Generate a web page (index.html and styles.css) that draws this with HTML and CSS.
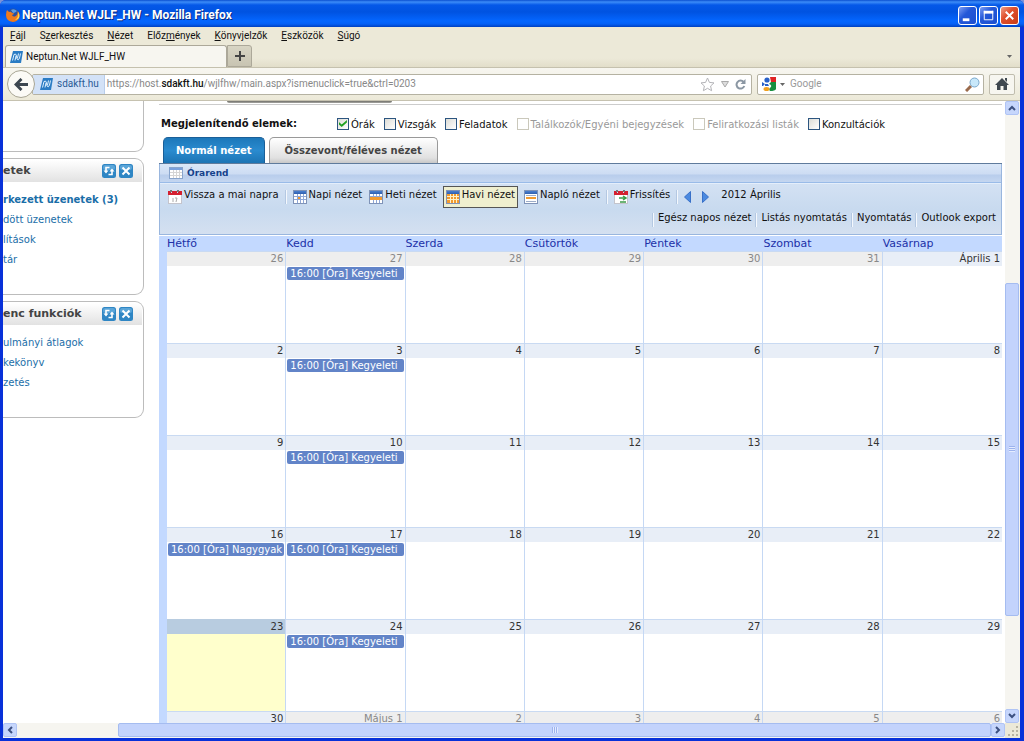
FILE: index.html
```html
<!DOCTYPE html>
<html lang="hu">
<head>
<meta charset="utf-8">
<title>Neptun.Net WJLF_HW</title>
<link rel="stylesheet" href="styles.css">
</head>
<body>
<svg class="defs" aria-hidden="true">
  <defs>
    <linearGradient id="g-blue" x1="0" y1="0" x2="0" y2="1"><stop offset="0" stop-color="#4a7fd0"/><stop offset="1" stop-color="#2f5fae"/></linearGradient>
    <symbol id="neptun" viewBox="0 0 13 12"><path d="M3 0H13L11 12H0Z" fill="#2a7cc4"/><path d="M2.500 9.500L4 3.500Q6 2 6.500 5L7 8Q8.500 10 9.500 7L10.500 2.500M5 9.500L6 5M7.500 7L8.500 2.500" fill="none" stroke="#dff1ff" stroke-width="1"/></symbol>
    <symbol id="cal" viewBox="0 0 14 14"><rect x=".5" y=".5" width="13" height="13" fill="#fff" stroke="#7f93b8"/><rect x="1" y="1" width="12" height="3" fill="url(#g-blue)"/></symbol>
    <symbol id="grid" viewBox="0 0 14 14"><path d="M1 6.500H13M1 9.500H13M4.500 4V13M7.500 4V13M10.500 4V13" stroke="#8ea6d6" fill="none"/></symbol>
    <symbol id="today" viewBox="0 0 14 14"><rect x=".5" y="4.500" width="13" height="9" fill="#fff" stroke="#c4c4cc"/><path d="M0 1H3V3H4V1H9V3H10V1H14V5H0Z" fill="#d42030"/><path d="M3 0V2M10 0V2" stroke="#777" stroke-width="2"/></symbol>
    <symbol id="sync" viewBox="0 0 14 14"><rect width="14" height="14" rx="2.500" fill="#2f86c4"/><rect x="1" y="1" width="12" height="5" rx="2" fill="#5aa5d8"/><path d="M7.500 3.500H4V7M6.500 10.500H10V7" fill="none" stroke="#fff" stroke-width="1.600"/><path d="M1.500 6.500H6.500L4 9.500ZM7.500 7.500H12.500L10 4.500Z" fill="#fff"/></symbol>
    <symbol id="close" viewBox="0 0 14 14"><rect width="14" height="14" rx="2.500" fill="#2f86c4"/><rect x="1" y="1" width="12" height="5" rx="2" fill="#5aa5d8"/><path d="M3.500 3.500L10.500 10.500M10.500 3.500L3.500 10.500" stroke="#fff" stroke-width="2"/></symbol>
  </defs>
</svg>
<div class="window">
  <header class="titlebar">
    <svg class="ic14" viewBox="0 0 14 14"><circle cx="7" cy="7" r="6.500" fill="#2850a0"/><path d="M5 2Q8 0 11 3Q9 5 7 5Z" fill="#5c9ce0"/><path d="M1 2L3 4Q5 3 6 5Q8 5 8 6L6 7Q7 9 9 8.500Q12 7 11.500 3Q14 5 13.500 9Q12 13.500 7 14Q0 13 0 7Q0 4 1 2Z" fill="#ee7a1c"/><path d="M12 4Q14 6 13 10Q11 12 9 12Q13 9 12 4Z" fill="#ffd34a"/></svg>
    <h1>Neptun.Net WJLF_HW - Mozilla Firefox</h1>
    <button class="winbtn" aria-label="Kis méret"><svg viewBox="0 0 18 18"><rect x="4" y="12" width="7" height="3" fill="#fff"/></svg></button>
    <button class="winbtn" aria-label="Teljes méret"><svg viewBox="0 0 18 18"><path d="M4.500 4V13.500H13.500V4" fill="none" stroke="#fff"/><rect x="4" y="4" width="10" height="3" fill="#fff"/></svg></button>
    <button class="winbtn winbtn-close" aria-label="Bezárás"><svg viewBox="0 0 18 18"><path d="M5 5L13 13M13 5L5 13" stroke="#fff" stroke-width="2"/></svg></button>
  </header>
  <div class="frame">
    <nav class="menubar">
      <button><u>F</u>ájl</button><button>S<u>z</u>erkesztés</button><button><u>N</u>ézet</button><button>Előz<u>m</u>ények</button><button><u>K</u>önyvjelzők</button><button><u>E</u>szközök</button><button><u>S</u>úgó</button>
    </nav>
    <div class="tabbar">
      <button class="btab"><svg class="favicon"><use href="#neptun"/></svg>Neptun.Net WJLF_HW</button>
      <button class="newtab" aria-label="Új lap"><svg viewBox="0 0 10 10"><path d="M5 0V10M0 5H10" stroke="#444" stroke-width="2"/></svg></button>
      <button class="alltabs" aria-label="Lapok listája"><svg viewBox="0 0 5 3"><path d="M0 0H5L2.500 3Z" fill="#666"/></svg></button>
    </div>
    <div class="navbar">
      <button class="back" aria-label="Vissza"><svg viewBox="0 0 16 14"><path d="M8 1L2 7L8 13M2 7H15" fill="none" stroke="#3c4650" stroke-width="3"/></svg></button>
      <div class="urlbar">
        <span class="site"><svg class="favicon"><use href="#neptun"/></svg>sdakft.hu</span>
        <div class="url" role="textbox" aria-label="Cím">https://host.<b>sdakft.hu</b>/wjlfhw/main.aspx?ismenuclick=true&amp;ctrl=0203</div>
        <svg class="ic15" viewBox="0 0 15 15"><path d="M7.500 1L9.400 5.400L14 5.900L10.600 9L11.600 13.700L7.500 11.300L3.400 13.700L4.400 9L1 5.900L5.600 5.400Z" fill="#fff" stroke="#b4b4b8"/></svg>
        <svg class="ic8" viewBox="0 0 8 7"><path d="M.5.500H7.500L4 6Z" fill="#ddd" stroke="#aaa"/></svg>
        <svg class="ic11" viewBox="0 0 11 11"><path d="M8.600 3A4 4 0 1 0 9.300 7" fill="none" stroke="#8b97a3" stroke-width="2"/><path d="M10.500 0V5H5.500Z" fill="#8b97a3"/></svg>
      </div>
      <form class="search">
        <svg class="ic14" viewBox="0 0 14 14"><rect width="14" height="14" fill="#fff"/><path d="M8 0H14V5H9Z" fill="#e02424"/><path d="M9 5H14V12Q13 14 8 14Q6 12 9 10Q10 8 7 7Z" fill="#189040"/><circle cx="5" cy="3" r="2.600" fill="#2860c8"/><path d="M0 5L3 7L1 9H0Z" fill="#2860c8"/><path d="M3 7L6 7L7 9H3Z" fill="#2860c8"/><ellipse cx="4.500" cy="12" rx="3" ry="2" fill="#f0a020"/></svg>
        <svg class="ic5" viewBox="0 0 5 3"><path d="M0 0H5L2.500 3Z" fill="#666"/></svg>
        <input type="text" placeholder="Google" aria-label="Google">
        <svg class="ic15" viewBox="0 0 15 15"><path d="M1 14L6 9" stroke="#9a6a4c" stroke-width="3"/><circle cx="9.500" cy="5.500" r="4.500" fill="#c8e8fa" stroke="#7aa8cc"/></svg>
      </form>
      <button class="home" aria-label="Kezdőlap"><svg viewBox="0 0 14 12"><path d="M7 0L14 7H12V12H8.500V8H5.500V12H2V7H0Z" fill="#40484f"/><path d="M10 0H12V4L10 2Z" fill="#40484f"/></svg></button>
    </div>
    <div class="viewport">
      <div class="page">
        <aside class="side">
          <section class="card card-top"></section>
          <section class="card card-messages">
            <header><h2>etek</h2><button aria-label="Frissítés"><svg><use href="#sync"/></svg></button><button aria-label="Bezárás"><svg><use href="#close"/></svg></button></header>
            <ul><li><a class="strong" href="#">rkezett üzenetek (3)</a></li><li><a href="#">dött üzenetek</a></li><li><a href="#">lítások</a></li><li><a href="#">tár</a></li></ul>
          </section>
          <section class="card card-fav">
            <header><h2>enc funkciók</h2><button aria-label="Frissítés"><svg><use href="#sync"/></svg></button><button aria-label="Bezárás"><svg><use href="#close"/></svg></button></header>
            <ul><li><a href="#">ulmányi átlagok</a></li><li><a href="#">kekönyv</a></li><li><a href="#">zetés</a></li></ul>
          </section>
        </aside>
        <main>
          <div class="topline"><span class="shade"></span></div>
          <div class="filters">
            <strong>Megjelenítendő elemek:</strong>
            <label><input type="checkbox" checked>Órák</label>
            <label><input type="checkbox">Vizsgák</label>
            <label><input type="checkbox">Feladatok</label>
            <label class="off"><input type="checkbox" disabled>Találkozók/Egyéni bejegyzések</label>
            <label class="off"><input type="checkbox" disabled>Feliratkozási listák</label>
            <label><input type="checkbox">Konzultációk</label>
          </div>
          <div class="tabs"><button class="tab active">Normál nézet</button><button class="tab tab-wide">Összevont/féléves nézet</button></div>
          <section class="panel">
            <h2 class="panel-title"><svg viewBox="0 0 14 14"><rect x=".5" y="1.500" width="13" height="11" fill="#fff" stroke="#88a4cc"/><path d="M1 3H13" stroke="#7aa0dc" stroke-width="2"/><path d="M1 6.500H13M1 9.500H13M4.500 4V12M7.500 4V12M10.500 4V12" stroke="#d5d5d5"/></svg>Órarend</h2>
            <div class="toolbar">
              <div class="tools">
                <button><svg viewBox="0 0 14 14"><use href="#today"/><path d="M5 8V12M7 8H9L8 12" fill="none" stroke="#aaa"/></svg>Vissza a mai napra</button>
                <i class="sep"></i>
                <button><svg viewBox="0 0 14 14"><use href="#cal"/><use href="#grid"/><rect x="5" y="7" width="2" height="2" fill="#f29a2e"/></svg>Napi nézet</button>
                <button><svg viewBox="0 0 14 14"><use href="#cal"/><use href="#grid"/><rect x="1" y="7" width="12" height="3" fill="#f29a2e"/></svg>Heti nézet</button>
                <button class="on"><svg viewBox="0 0 14 14"><use href="#cal"/><rect x="1" y="4" width="12" height="9" fill="#f29a2e"/><path d="M1 6.500H13M1 9.500H13M4.500 4V13M7.500 4V13M10.500 4V13" stroke="#fff2c8"/></svg>Havi nézet</button>
                <button><svg viewBox="0 0 14 14"><use href="#cal"/><path d="M2 8H12" stroke="#f29a2e" stroke-width="2"/><path d="M2 5.500H12M2 11.500H12" stroke="#9cacc8"/></svg>Napló nézet</button>
                <i class="sep"></i>
                <button><svg viewBox="0 0 14 14"><use href="#today"/><path d="M5 8H11M9 6L12 8L9 10M12 12H6" fill="none" stroke="#3c9c48" stroke-width="1.500"/></svg>Frissítés</button>
                <i class="sep"></i>
                <button class="arrow" aria-label="Előző"><svg viewBox="0 0 7 12"><path d="M6.500.500V11.500L.5 6Z" fill="#4b8ae0" stroke="#3870c8"/></svg></button>
                <button class="arrow" aria-label="Következő"><svg viewBox="0 0 7 12"><path d="M.5.500V11.500L6.500 6Z" fill="#4b8ae0" stroke="#3870c8"/></svg></button>
                <span class="month">2012 Április</span>
              </div>
              <div class="tools tools-end">
                <i class="sep"></i><button>Egész napos nézet</button><i class="sep"></i><button>Listás nyomtatás</button><i class="sep"></i><button>Nyomtatás</button><i class="sep"></i><button>Outlook export</button>
              </div>
            </div>
          </section>
          <div class="calendar">
            <table>
              <thead><tr><th>Hétfő</th><th>Kedd</th><th>Szerda</th><th>Csütörtök</th><th>Péntek</th><th>Szombat</th><th>Vasárnap</th></tr></thead>
              <tbody>
                <tr><td class="other"><time>26</time></td><td class="other"><time>27</time><a class="event" href="#">16:00 [Óra] Kegyeleti</a></td><td class="other"><time>28</time></td><td class="other"><time>29</time></td><td class="other"><time>30</time></td><td class="other"><time>31</time></td><td><time>Április 1</time></td></tr>
                <tr><td><time>2</time></td><td><time>3</time><a class="event" href="#">16:00 [Óra] Kegyeleti</a></td><td><time>4</time></td><td><time>5</time></td><td><time>6</time></td><td><time>7</time></td><td><time>8</time></td></tr>
                <tr><td><time>9</time></td><td><time>10</time><a class="event" href="#">16:00 [Óra] Kegyeleti</a></td><td><time>11</time></td><td><time>12</time></td><td><time>13</time></td><td><time>14</time></td><td><time>15</time></td></tr>
                <tr><td><time>16</time><a class="event" href="#">16:00 [Óra] Nagygyak</a></td><td><time>17</time><a class="event" href="#">16:00 [Óra] Kegyeleti</a></td><td><time>18</time></td><td><time>19</time></td><td><time>20</time></td><td><time>21</time></td><td><time>22</time></td></tr>
                <tr><td class="now"><time>23</time></td><td><time>24</time><a class="event" href="#">16:00 [Óra] Kegyeleti</a></td><td><time>25</time></td><td><time>26</time></td><td><time>27</time></td><td><time>28</time></td><td><time>29</time></td></tr>
                <tr><td><time>30</time></td><td class="other"><time>Május 1</time></td><td class="other"><time>2</time></td><td class="other"><time>3</time></td><td class="other"><time>4</time></td><td class="other"><time>5</time></td><td class="other"><time>6</time></td></tr>
              </tbody>
            </table>
          </div>
        </main>
      </div>
      <div class="vscroll">
        <button aria-label="Fel"><svg viewBox="0 0 8 6"><path d="M1 5L4 2L7 5" /></svg></button>
        <div class="track"><span class="thumb"><i class="grip"></i></span></div>
        <button aria-label="Le"><svg viewBox="0 0 8 6"><path d="M1 1L4 4L7 1" /></svg></button>
      </div>
      <div class="hscroll">
        <button aria-label="Balra"><svg viewBox="0 0 6 8"><path d="M5 1L2 4L5 7" /></svg></button>
        <div class="track"><span class="thumb"><i class="grip"></i></span></div>
        <button aria-label="Jobbra"><svg viewBox="0 0 6 8"><path d="M1 1L4 4L1 7" /></svg></button>
      </div>
      <div class="corner"><svg viewBox="0 0 11 11"><path d="M8 0h2v2h-2zM4 4h2v2h-2zM8 4h2v2h-2zM0 8h2v2h-2zM4 8h2v2h-2zM8 8h2v2h-2z" fill="#b8b4a2"/></svg></div>
    </div>
  </div>
</div>
</body>
</html>
```
FILE: styles.css
```css
* { box-sizing: border-box; }
html, body { height: 100%; margin: 0; }
body { overflow: hidden; font: 10px/14px "DejaVu Sans", Verdana, sans-serif; color: #111; background: #7a92d8; }
button { margin: 0; padding: 0; border: 0; background: none; font: inherit; color: inherit; white-space: nowrap; }
svg { display: block; flex: none; }
a { text-decoration: none; }
h1, h2, ul { margin: 0; padding: 0; list-style: none; }
.defs { position: absolute; width: 0; height: 0; }
.ic15 { width: 15px; height: 15px; }
.ic14 { width: 14px; height: 14px; }
.ic11 { width: 11px; height: 11px; }
.ic8 { width: 8px; height: 7px; }
.ic5 { width: 5px; height: 3px; }
.favicon { width: 13px; height: 12px; }

/* Window frame */
.window { height: 100%; display: flex; flex-direction: column; border-radius: 6px 6px 0 0; overflow: hidden; background: #0831d9; }
.titlebar { flex: none; display: flex; align-items: center; gap: 2px; height: 27px; padding: 3px 5px 0 6px; color: #fff; background: linear-gradient(#0a4fd0 0, #3c8cf8 2px, #0458e8 5px, #0053e1 12px, #0466ff 21px, #0460f5 24px, #0040c0 27px); }
.titlebar h1 { flex: 1; font: bold 12px/16px Roboto, "Noto Sans", sans-serif; text-shadow: 1px 1px 0 #0a2a80; }
.winbtn { width: 19px; height: 19px; border: 1px solid #fff; border-radius: 3px; background: linear-gradient(135deg, #7f9ff5, #2458d8 40%, #1c4fd0); }
.winbtn svg { width: 17px; height: 17px; }
.winbtn-close { background: linear-gradient(135deg, #f0a088, #e0502c 40%, #c83c18); }
.frame { flex: 1; min-height: 0; display: flex; flex-direction: column; margin: 0 4px 3px 3px; background: #ece9d8; font-family: "DejaVu Sans", Verdana, sans-serif; }
.menubar { flex: none; display: flex; gap: 14px; height: 18px; padding-left: 7px; font: 10px/18px Roboto, "Noto Sans", sans-serif; }
.tabbar { flex: none; display: flex; height: 23px; padding-left: 2px; border-bottom: 1px solid #c5c1ae; background: linear-gradient(#ece9d8 60%, #e2deca); font: 10px/22px Roboto, "Noto Sans", sans-serif; }
.btab { display: flex; align-items: center; gap: 3px; width: 222px; padding-left: 4px; border: 1px solid #aca899; border-bottom: 0; border-radius: 3px 3px 0 0; background: #f7f6f0; text-align: left; }
.newtab { display: flex; align-items: center; justify-content: center; width: 25px; border: 1px solid #aca899; border-radius: 0 3px 0 0; background: linear-gradient(#d8d5c4, #c8c4b2); }
.newtab svg { width: 10px; height: 10px; }
.alltabs { margin-left: auto; padding: 0 8px; }
.alltabs svg { width: 5px; height: 3px; }
.navbar { flex: none; display: flex; align-items: center; height: 33px; padding: 0 5px 0 4px; border-bottom: 1px solid #c6c2b0; background: linear-gradient(#f7f6f0, #ece9d8); font: 10px/18px Roboto, "Noto Sans", sans-serif; }
.back { display: flex; align-items: center; justify-content: center; width: 28px; height: 28px; margin-right: -3px; border: 1px solid #a8a594; border-radius: 50%; background: #fbfaf6; z-index: 1; }
.back svg { width: 15px; height: 13px; }
.urlbar { flex: 1; display: flex; align-items: center; gap: 6px; height: 21px; margin-right: 5px; padding-right: 5px; border: 1px solid #b5b2a2; border-radius: 2px; background: #fff; color: #888; }
.site { display: flex; align-items: center; gap: 4px; height: 19px; padding: 0 5px 0 7px; background: #d3e2f7; border-right: 1px solid #b8cdea; color: #2a5a96; }
.url { flex: 1; margin-left: -4px; }
.url b { color: #111; font-weight: 500; }
.search { flex: none; display: flex; align-items: center; gap: 4px; width: 23%; max-width: 227px; min-width: 120px; height: 21px; margin-right: 5px; padding: 0 3px 0 4px; border: 1px solid #b5b2a2; border-radius: 2px; background: #fff; }
.search input { flex: 1; min-width: 0; padding: 0 1px; border: 0; background: none; font: inherit; }
.search input::placeholder { color: #999; opacity: 1; }
.home { display: flex; align-items: center; justify-content: center; width: 26px; height: 21px; border: 1px solid #c0bdae; border-radius: 2px; background: #f7f6f0; }
.home svg { width: 14px; height: 12px; }

/* Scrollable viewport */
.viewport { flex: 1; min-height: 0; display: grid; grid-template: minmax(0, 1fr) 15px / minmax(0, 1fr) 15px; }
.page { display: flex; gap: 15px; padding-right: 3px; overflow: hidden; background: #fff; }
.vscroll, .hscroll { display: flex; background: #f6f5f0; }
.vscroll { flex-direction: column; }
.vscroll button, .hscroll button { display: flex; align-items: center; justify-content: center; flex: none; width: 14px; height: 14px; border: 1px solid #b0c4f5; border-radius: 2px; background: #c6d6fc; }
.vscroll svg { width: 8px; height: 6px; }
.hscroll svg { width: 6px; height: 8px; }
.vscroll path, .hscroll path { fill: none; stroke: #3c5080; stroke-width: 2; }
.track { flex: 1; display: flex; }
.vscroll .track { flex-direction: column; }
.thumb { display: flex; align-items: center; justify-content: center; border: 1px solid #a5bcf0; border-radius: 2px; background: #c3d3fc; }
.vscroll .thumb { height: 56%; margin-top: 168px; margin-right: 1px; }
.hscroll .thumb { flex: 1; height: 14px; margin-left: 101px; }
.grip { width: 6px; height: 6px; background: repeating-linear-gradient(#9db3ee 0 1px, #e4ecff 1px 2px); }
.hscroll .grip { background: repeating-linear-gradient(90deg, #9db3ee 0 1px, #e4ecff 1px 2px); }
.corner { padding: 3px; background: #ece9d8; }
.corner svg { width: 11px; height: 11px; }

/* Side column */
.side { flex: none; width: 141px; display: flex; flex-direction: column; gap: 6px; }
.card { border: 1px solid #bcbcbc; border-left: 0; border-radius: 0 9px 9px 0; overflow: hidden; padding: 1px 1px 0 0; }
.card-top { height: 51px; border-top: 0; border-radius: 0 0 9px 0; }
.card-messages { height: 137px; }
.card-fav { height: 117px; }
.card header { display: flex; align-items: center; gap: 3px; height: 22px; padding-right: 9px; border-radius: 0 7px 0 0; background: linear-gradient(#fff, #e2e2e2); }
.card h2 { flex: 1; font-size: 11px; line-height: 22px; color: #444; }
.card header svg { width: 14px; height: 14px; }
.card ul { padding-top: 8px; line-height: 20px; }
.card a { color: #1a6ea8; }
.card .strong { font-weight: bold; }

/* Main column */
main { flex: 1; min-width: 0; }
.topline { height: 4px; border-bottom: 1px solid #ccc; }
.shade { display: block; width: 165px; height: 2px; margin-left: 68px; background: linear-gradient(#6f6f68, #a8a8a4); border-radius: 0 0 3px 3px; }
.filters { display: flex; align-items: center; gap: 9px; height: 32px; padding: 6px 0 0 2px; white-space: nowrap; }
.filters strong { margin-right: 31px; }
.filters label { display: flex; align-items: center; gap: 2px; line-height: 12px; padding-top: 1px; }
.filters .off { color: #999; }
.filters input { appearance: none; display: grid; place-content: center; width: 12px; height: 12px; margin: 0 0 2px; border: 1px solid #2c5580; background: linear-gradient(135deg, #dcdcd6, #fff); }
.filters input:disabled { border-color: #cac8bb; background: #fff; }
.filters input:checked::before { content: ""; width: 8px; height: 7px; background: #21a121; clip-path: polygon(0 30%, 35% 65%, 100% 0, 100% 35%, 35% 100%, 0 65%); }
.tabs { display: flex; gap: 4px; height: 27px; padding-left: 4px; border-bottom: 1px solid #5f7b9c; }
.tab { padding: 0 12px; border: 1px solid #999; border-bottom: 0; border-radius: 5px 5px 0 0; background: linear-gradient(#fff, #e0e0e0 80%, #c8c8c8); color: #444; font-weight: bold; line-height: 24px; }
.tab-wide { padding: 0 15px; }
.tab.active { border-color: #1a5f98; background: linear-gradient(#1c78ba, #2a8bcf 50%, #1c74b4); color: #fff; }
.panel { border: 1px solid #99b6de; border-top: 0; }
.panel-title { display: flex; align-items: center; gap: 4px; height: 19px; padding-left: 9px; border-bottom: 1px solid #99bbe8; background: linear-gradient(#dae7f8 0, #cddcf3 10px, #b8cdec 11px, #c4d6f0 18px); color: #15428b; font-size: 9px; line-height: 18px; }
.panel-title svg { width: 14px; height: 14px; }
.toolbar { height: 51px; padding-top: 1px; background: linear-gradient(#d3e1f3, #c8daef 50%, #d4e0f0); border-top: 1px solid #e4eefb; }
.tools { display: flex; align-items: center; gap: 5px; height: 23px; padding-left: 7px; }
.tools button { display: flex; align-items: center; gap: 2px; height: 22px; line-height: 18px; padding: 0 1px 3px; }
.tools button svg { width: 14px; height: 14px; margin: 4px 0 0; }
.tools .on { padding: 0 2px 3px; border: 1px solid #555; background: #efefcf; }
.tools .arrow { width: 13px; }
.tools .arrow svg { width: 7px; height: 12px; }
.month { padding: 0 0 4px 2px; }
.sep { flex: none; width: 2px; height: 14px; border-left: 1px solid #b4c8e2; border-right: 1px solid #f4f8fd; }
.tools-end { justify-content: flex-end; gap: 3px; padding-right: 4px; }

/* Month calendar */
.calendar { margin-top: 1px; padding-left: 8px; background: #c3d9ff; }
.calendar table { width: 100%; table-layout: fixed; border-collapse: separate; border-spacing: 0; background: #fff; }
.calendar th { padding: 0; height: 15px; background: #c3d9ff; color: #2030a8; font: 11px/15px "DejaVu Sans", Verdana, sans-serif; text-align: left; }
.calendar td { height: 92px; padding: 0; vertical-align: top; border-right: 1px solid #c5d8f4; }
.calendar td:last-child { border-right: 0; }
.calendar time { display: block; height: 15px; padding-right: 2px; border-top: 1px solid #c9daf2; background: #e8eef7; color: #333; line-height: 14px; text-align: right; }
.calendar .other time { background: #eee; color: #888; }
.calendar .now { background: #ffffcc; }
.calendar .now time { background: #b8cce0; border-color: #b8cce0; }
.event { display: block; height: 13px; margin: 1px 1px 0; padding: 0 0 0 3px; border-radius: 2px; background: #6284c8; color: #fff; line-height: 14px; white-space: nowrap; overflow: hidden; }
```
